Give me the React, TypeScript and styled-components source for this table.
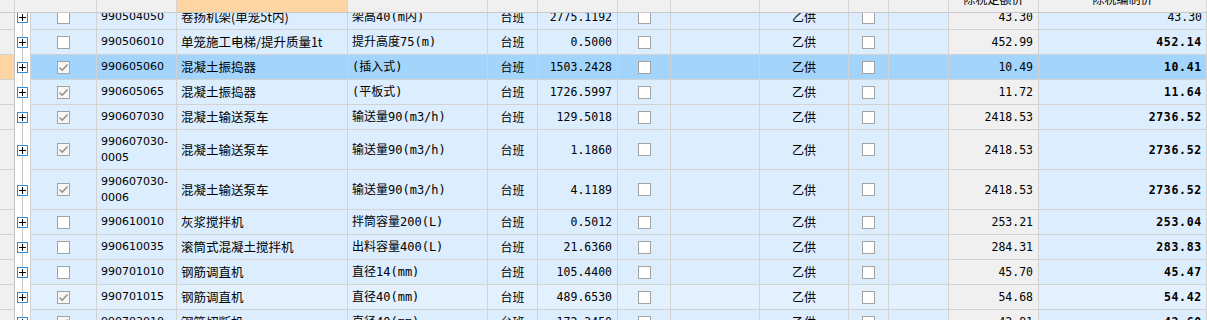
import React from 'react';
import styled, { createGlobalStyle } from 'styled-components';

const COLS =
  '15px 16px 66px 80px 171px 140px 50px 80px 53px 89px 89px 40px 60px 90px 168px';

const LINE = '#d2d2d2';
const ROW_BG = '#dcedfd';
const HOVER_BG = '#e3f1fe';
const SEL_BG = '#a3d4fb';
const GRAY_BG = '#f0f0f0';
const PEACH = '#fdd4a4';

const GlobalStyle = createGlobalStyle`
  html, body { margin: 0; padding: 0; background: #fff; overflow: hidden; }
  #root { width: 1207px; height: 320px; }
`;

const Sheet = styled.div`
  width: 1207px;
  height: 320px;
  overflow: hidden;
  display: flex;
  flex-direction: column;
  background: #fff;
`;

const HeaderRow = styled.div`
  display: grid;
  grid-template-columns: ${COLS};
  height: 13px;
  flex: none;
`;

const HeaderCell = styled.div<{ $span?: number; $active?: boolean }>`
  grid-column: span ${(p) => p.$span ?? 1};
  box-sizing: border-box;
  background: ${(p) => (p.$active ? PEACH : GRAY_BG)};
  border-right: 1px solid #d4d4d4;
  border-bottom: 1px solid #c9c9c9;
  overflow: hidden;
  text-align: center;
  color: #000;
  font: 12px/12px 'Noto Sans CJK SC', sans-serif;
`;

const HeaderLabel = styled.span`
  display: block;
  margin-top: -7px;
`;

const Body = styled.div`
  flex: 1;
  overflow: hidden;
`;

const Row = styled.div<{ $h: number; $first?: boolean }>`
  display: grid;
  grid-template-columns: ${COLS};
  height: ${(p) => p.$h}px;
  margin-top: ${(p) => (p.$first ? '-8px' : '0')};
`;

type Align = 'left' | 'center' | 'right';

const Cell = styled.div<{ $bg: string; $align?: Align }>`
  box-sizing: border-box;
  background: ${(p) => p.$bg};
  border-right: 1px solid ${LINE};
  border-bottom: 1px solid ${LINE};
  display: flex;
  align-items: center;
  justify-content: ${(p) =>
    p.$align === 'right' ? 'flex-end' : p.$align === 'center' ? 'center' : 'flex-start'};
  padding: 0 4px;
  overflow: hidden;
  white-space: nowrap;
  color: #000;
`;

const RowHead = styled.div<{ $active?: boolean }>`
  box-sizing: border-box;
  background: ${(p) => (p.$active ? PEACH : GRAY_BG)};
  border-right: 1px solid #c4c4c4;
  border-bottom: 1px solid ${LINE};
`;

const TreeCell = styled.div`
  box-sizing: border-box;
  border-right: 1px solid ${LINE};
  background: linear-gradient(#c6c6c6, #c6c6c6) no-repeat 7px 0 / 1px 100%, #fff;
  display: flex;
  align-items: center;
  padding-left: 2px;
`;

const PlusBox = styled.div`
  box-sizing: border-box;
  width: 11px;
  height: 11px;
  border: 1px solid #2a8fd8;
  background: #fff;
  display: flex;
  align-items: center;
  justify-content: center;
`;

const CodeCell = styled(Cell)`
  font: 11px/16px 'DejaVu Sans', sans-serif;
  white-space: normal;
`;

const NameCell = styled(Cell)`
  font: 12.5px/16px 'Noto Sans CJK SC', sans-serif;
`;

const SpecCell = styled(Cell)`
  font: 12px/16px 'DejaVu Sans Mono', 'Noto Sans CJK SC', monospace;
`;

const CjkCell = styled(Cell)`
  font: 12px/16px 'Noto Sans CJK SC', sans-serif;
`;

const NumCell = styled(Cell)`
  font: 11.5px/16px 'DejaVu Sans Mono', monospace;
  padding-right: 5px;
`;

const PriceCell = styled(Cell)<{ $bold?: boolean }>`
  font: ${(p) => (p.$bold ? 'bold' : 'normal')} 11.5px/16px 'DejaVu Sans Mono', monospace;
  letter-spacing: ${(p) => (p.$bold ? '0.7px' : '0')};
  padding-right: 4px;
`;

const Box = styled.div<{ $checked?: boolean }>`
  box-sizing: border-box;
  width: 13px;
  height: 13px;
  border: 1px solid #a2a2a2;
  background: ${(p) => (p.$checked ? '#f7f7f7' : '#fff')};
  display: flex;
  align-items: center;
  justify-content: center;
`;

const Plus = () => (
  <PlusBox>
    <svg width="7" height="7" viewBox="0 0 7 7">
      <path d="M0 3.5H7M3.5 0V7" stroke="#000" strokeWidth="1" shapeRendering="crispEdges" />
    </svg>
  </PlusBox>
);

const Check = ({ checked }: { checked?: boolean }) => (
  <Box $checked={checked}>
    {checked && (
      <svg width="11" height="11" viewBox="0 0 11 11">
        <path d="M1.5 5.5L4.2 8.2L9.5 2.5" fill="none" stroke="#8c8c8c" strokeWidth="1.4" />
      </svg>
    )}
  </Box>
);

type Item = {
  code: string;
  name: string;
  spec: string;
  qty: string;
  quota: string;
  price: string;
  checked?: boolean;
  tall?: boolean;
  selected?: boolean;
  hover?: boolean;
};

const rows: Item[] = [
  { code: '990504050', name: '卷扬机架(单笼5t内)', spec: '架高40(m内)', qty: '2775.1192', quota: '43.30', price: '43.30' },
  { code: '990506010', name: '单笼施工电梯/提升质量1t', spec: '提升高度75(m)', qty: '0.5000', quota: '452.99', price: '452.14' },
  { code: '990605060', name: '混凝土振捣器', spec: '(插入式)', qty: '1503.2428', quota: '10.49', price: '10.41', checked: true, selected: true },
  { code: '990605065', name: '混凝土振捣器', spec: '(平板式)', qty: '1726.5997', quota: '11.72', price: '11.64', checked: true },
  { code: '990607030', name: '混凝土输送泵车', spec: '输送量90(m3/h)', qty: '129.5018', quota: '2418.53', price: '2736.52', checked: true },
  { code: '990607030-0005', name: '混凝土输送泵车', spec: '输送量90(m3/h)', qty: '1.1860', quota: '2418.53', price: '2736.52', checked: true, tall: true },
  { code: '990607030-0006', name: '混凝土输送泵车', spec: '输送量90(m3/h)', qty: '4.1189', quota: '2418.53', price: '2736.52', checked: true, tall: true },
  { code: '990610010', name: '灰浆搅拌机', spec: '拌筒容量200(L)', qty: '0.5012', quota: '253.21', price: '253.04' },
  { code: '990610035', name: '滚筒式混凝土搅拌机', spec: '出料容量400(L)', qty: '21.6360', quota: '284.31', price: '283.83' },
  { code: '990701010', name: '钢筋调直机', spec: '直径14(mm)', qty: '105.4400', quota: '45.70', price: '45.47' },
  { code: '990701015', name: '钢筋调直机', spec: '直径40(mm)', qty: '489.6530', quota: '54.68', price: '54.42', checked: true, hover: true },
  { code: '990702010', name: '钢筋切断机', spec: '直径40(mm)', qty: '172.3450', quota: '42.81', price: '42.60', checked: true },
];

export default function App() {
  return (
    <>
      <GlobalStyle />
      <Sheet>
        <HeaderRow>
          <HeaderCell />
          <HeaderCell $span={2} />
          <HeaderCell />
          <HeaderCell $active />
          <HeaderCell />
          <HeaderCell />
          <HeaderCell />
          <HeaderCell />
          <HeaderCell />
          <HeaderCell />
          <HeaderCell />
          <HeaderCell />
          <HeaderCell>
            <HeaderLabel>除税定额价</HeaderLabel>
          </HeaderCell>
          <HeaderCell>
            <HeaderLabel>除税编制价</HeaderLabel>
          </HeaderCell>
        </HeaderRow>
        <Body>
          {rows.map((r, i) => {
            const bg = r.selected ? SEL_BG : r.hover ? HOVER_BG : ROW_BG;
            const quotaBg = r.selected ? SEL_BG : GRAY_BG;
            return (
              <Row key={i} $h={r.tall ? 40 : 25} $first={i === 0}>
                <RowHead $active={r.selected} />
                <TreeCell>
                  <Plus />
                </TreeCell>
                <Cell $bg={bg} $align="center">
                  <Check checked={r.checked} />
                </Cell>
                <CodeCell $bg={bg}>{r.code}</CodeCell>
                <NameCell $bg={bg}>{r.name}</NameCell>
                <SpecCell $bg={bg}>{r.spec}</SpecCell>
                <CjkCell $bg={bg} $align="center">台班</CjkCell>
                <NumCell $bg={bg} $align="right">{r.qty}</NumCell>
                <Cell $bg={bg} $align="center">
                  <Check />
                </Cell>
                <Cell $bg={bg} />
                <CjkCell $bg={bg} $align="center">乙供</CjkCell>
                <Cell $bg={bg} $align="center">
                  <Check />
                </Cell>
                <Cell $bg={bg} />
                <NumCell $bg={quotaBg} $align="right">{r.quota}</NumCell>
                <PriceCell $bg={bg} $align="right" $bold={r.price !== r.quota}>
                  {r.price}
                </PriceCell>
              </Row>
            );
          })}
        </Body>
      </Sheet>
    </>
  );
}
